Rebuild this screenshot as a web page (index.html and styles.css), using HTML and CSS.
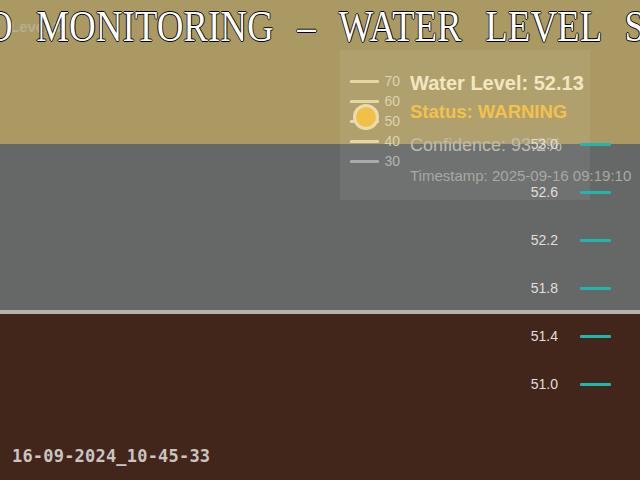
FILE: index.html
```html
<!DOCTYPE html>
<html>
<head>
<meta charset="utf-8">
<link rel="stylesheet" href="styles.css">
</head>
<body>
<div class="feed">
  <div class="band sky"></div>
  <div class="band wall"></div>
  <div class="band edge"></div>
  <div class="band water"></div>

  <div class="ghost">Level 3</div>
  <div class="title">O MONITORING &ndash; WATER LEVEL SYSTEM</div>

  <div class="panel">
    <div class="scale">
      <div class="tick-row cream"><span class="bar"></span><span class="num">70</span></div>
      <div class="tick-row cream"><span class="bar"></span><span class="num">60</span></div>
      <div class="tick-row cream"><span class="bar"></span><span class="num">50</span></div>
      <div class="tick-row cream"><span class="bar"></span><span class="num">40</span></div>
      <div class="tick-row grey"><span class="bar"></span><span class="num">30</span></div>
      <span class="marker"></span>
    </div>
    <div class="readout">
      <div class="level">Water Level: 52.13</div>
      <div class="status">Status: WARNING</div>
      <div class="confidence">Confidence: 93.2%</div>
      <div class="stamp">Timestamp: 2025-09-16 09:19:10</div>
    </div>
  </div>

  <div class="ruler">
    <div class="mark"><span class="val">53.0</span><span class="line"></span></div>
    <div class="mark"><span class="val">52.6</span><span class="line"></span></div>
    <div class="mark"><span class="val">52.2</span><span class="line"></span></div>
    <div class="mark"><span class="val">51.8</span><span class="line"></span></div>
    <div class="mark"><span class="val">51.4</span><span class="line"></span></div>
    <div class="mark"><span class="val">51.0</span><span class="line"></span></div>
  </div>

  <div class="filename">16-09-2024_10-45-33</div>
</div>
</body>
</html>
```

FILE: styles.css
```css
html, body {
  margin: 0;
  padding: 0;
  background: #43251a;
}
.feed {
  position: relative;
  width: 640px;
  height: 480px;
  overflow: hidden;
  display: flex;
  flex-direction: column;
  font-family: "Liberation Sans", Arial, sans-serif;
}
.band { flex: none; }
.sky { height: 144px; background: #ab9964; }
.wall { height: 166px; background: #666867; }
.edge { height: 4px; background: #b6b3ad; }
.water { flex: 1; background: #42251b; }

.ghost {
  position: absolute;
  left: 10px;
  top: 18px;
  font-size: 15px;
  font-weight: bold;
  color: #bdb7a2;
  opacity: 0.7;
}
.title {
  position: absolute;
  left: -14px;
  top: 3px;
  font-family: "Liberation Serif", "Times New Roman", serif;
  font-size: 44px;
  line-height: 48px;
  white-space: nowrap;
  word-spacing: 17px;
  color: #ffffff;
  transform: scaleX(0.84);
  transform-origin: 0 0;
  text-shadow: 1px 0 #000, -1px 0 #000, 0 1px #000, 0 -1px #000;
}

.panel {
  position: absolute;
  left: 340px;
  top: 50px;
  width: 250px;
  height: 150px;
  background: rgba(255, 255, 255, 0.07);
  display: flex;
}
.scale {
  position: relative;
  padding: 21px 0 0 10px;
  width: 60px;
  box-sizing: border-box;
  display: flex;
  flex-direction: column;
}
.tick-row {
  height: 20px;
  display: flex;
  align-items: center;
  gap: 5px;
}
.bar {
  width: 31px;
  height: 3px;
  border-radius: 1px;
}
.num {
  font-size: 14px;
  line-height: 14px;
}
.cream .bar { background: #e6d6a4; }
.cream .num { color: #ddd2b0; }
.grey .bar { background: #a9abaa; }
.grey .num { color: #b4b5b2; }
.marker {
  position: absolute;
  left: 13px;
  top: 54px;
  width: 20px;
  height: 20px;
  border-radius: 50%;
  background: #f1c048;
  border: 3px solid #eadcae;
}
.readout {
  padding-top: 23px;
  padding-left: 10px;
  display: flex;
  flex-direction: column;
  white-space: nowrap;
}
.level {
  font-size: 20px;
  line-height: 20px;
  font-weight: bold;
  color: #f3e6c0;
}
.status {
  margin-top: 9px;
  font-size: 18.5px;
  line-height: 20px;
  font-weight: bold;
  color: #f2c24c;
}
.confidence {
  margin-top: 13px;
  font-size: 18px;
  line-height: 20px;
  color: #bfbcac;
}
.stamp {
  margin-top: 13px;
  font-size: 15px;
  line-height: 16px;
  color: #a9a8a2;
}

.ruler {
  position: absolute;
  left: 518px;
  top: 120px;
  display: flex;
  flex-direction: column;
}
.mark {
  height: 48px;
  display: flex;
  align-items: center;
  gap: 22px;
}
.val {
  width: 40px;
  text-align: right;
  font-size: 14px;
  line-height: 14px;
  color: #e2dfda;
}
.line {
  width: 31px;
  height: 3px;
  border-radius: 1px;
  background: #1fb6b0;
}

.filename {
  position: absolute;
  left: 12px;
  top: 448px;
  font-family: "DejaVu Sans Mono", "Liberation Mono", monospace;
  font-weight: bold;
  font-size: 17px;
  line-height: 17px;
  letter-spacing: 0.2px;
  color: #c9c5c1;
}
```
